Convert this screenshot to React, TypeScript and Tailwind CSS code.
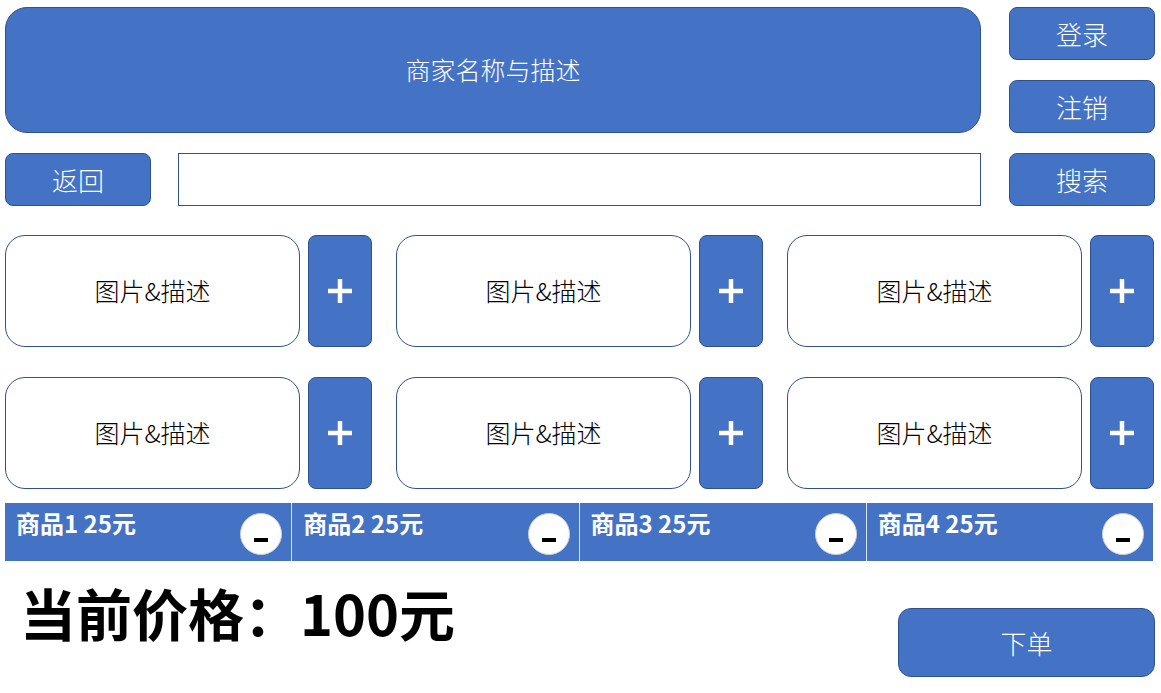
import React from 'react';

const font = { fontFamily: '"Noto Sans CJK SC", "Noto Sans", sans-serif' };

const BlueButton: React.FC<{ label: string; className?: string }> = ({ label, className = '' }) => (
  <button
    className={`flex items-center justify-center bg-[#4472c4] border border-[#2f528f] text-white font-light ${className}`}
  >
    {label}
  </button>
);

const ItemCard: React.FC = () => (
  <div className="flex gap-[8px]">
    <div className="w-[295px] h-[112px] flex items-center justify-center border border-[#2f528f] rounded-[20px] bg-white text-[25px] font-light text-black">
      图片&amp;描述
    </div>
    <button className="w-[64px] h-[112px] flex items-center justify-center bg-[#4472c4] border border-[#2f528f] rounded-[8px] text-white">
      <svg width="28" height="28" viewBox="0 0 28 28">
        <path d="M14 2v24M2 14h24" stroke="white" strokeWidth="4.5" />
      </svg>
    </button>
  </div>
);

const CartCell: React.FC<{ index: number }> = ({ index }) => (
  <div className="relative flex-1 h-[58px] bg-[#4472c4] px-[11px] pt-[4px]">
    <span className="text-white font-bold text-[24px] leading-[32px]">商品{index} 25元</span>
    <button className="absolute right-[9px] top-[10px] w-[42px] h-[42px] rounded-full bg-white border border-[#d0d0d0] flex items-end justify-center pb-[12px]">
      <span className="block w-[14px] h-[4px] bg-black" />
    </button>
  </div>
);

export default function App() {
  return (
    <div className="w-[1161px] h-[693px] bg-white pl-[5px] pt-[7px] overflow-hidden" style={font}>
      <div className="flex gap-[28px]">
        <div className="flex flex-col gap-[20px] w-[976px]">
          <div className="h-[126px] flex items-center justify-center bg-[#4472c4] border border-[#2f528f] rounded-[22px] text-white font-light text-[25px]">
            商家名称与描述
          </div>
          <div className="flex gap-[27px]">
            <BlueButton label="返回" className="w-[146px] h-[53px] rounded-[8px] text-[26px]" />
            <input className="flex-1 h-[53px] border border-[#2f528f] bg-white outline-none" />
          </div>
        </div>
        <div className="flex flex-col gap-[20px] w-[146px]">
          <BlueButton label="登录" className="h-[53px] rounded-[8px] text-[26px]" />
          <BlueButton label="注销" className="h-[53px] rounded-[8px] text-[26px]" />
          <BlueButton label="搜索" className="h-[53px] rounded-[8px] text-[26px]" />
        </div>
      </div>

      <div className="flex flex-col gap-[30px] mt-[29px]">
        <div className="flex gap-[24px]">
          <ItemCard />
          <ItemCard />
          <ItemCard />
        </div>
        <div className="flex gap-[24px]">
          <ItemCard />
          <ItemCard />
          <ItemCard />
        </div>
      </div>

      <div className="mt-[14px] w-[1148px] flex gap-[1px] bg-[#dbe4f3]">
        <CartCell index={1} />
        <CartCell index={2} />
        <CartCell index={3} />
        <CartCell index={4} />
      </div>

      <div className="flex items-start justify-between w-[1150px]">
        <div className="pl-[15px] pt-[15px] text-[56px] font-bold text-black leading-[72px]">
          当前价格：100元
        </div>
        <BlueButton label="下单" className="mt-[47px] w-[257px] h-[69px] rounded-[13px] text-[26px]" />
      </div>
    </div>
  );
}
